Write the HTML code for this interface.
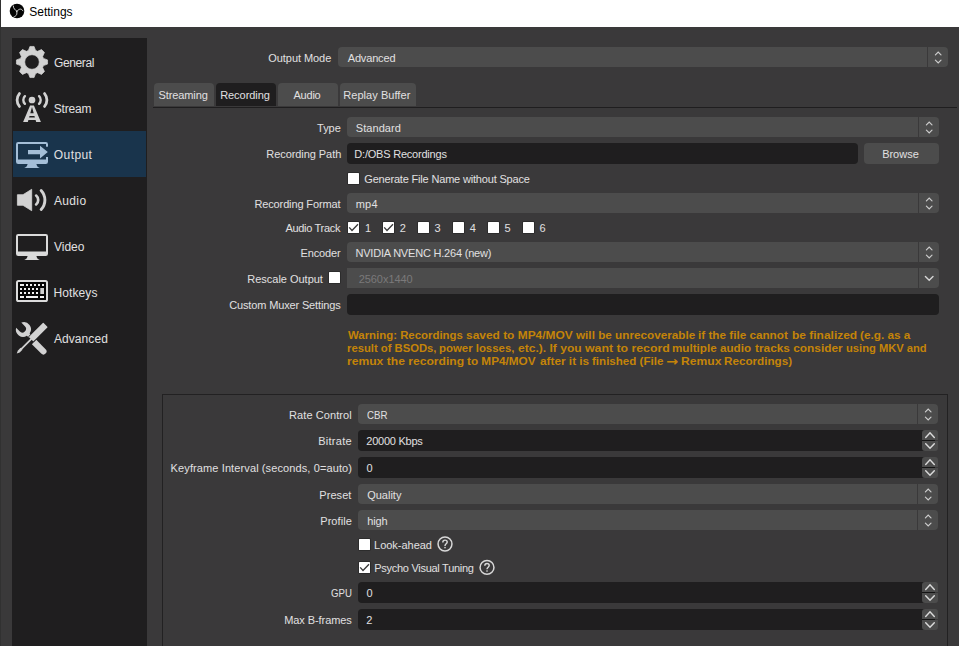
<!DOCTYPE html>
<html><head><meta charset="utf-8"><title>Settings</title>
<style>
html,body{margin:0;padding:0}
body{width:959px;height:646px;overflow:hidden;position:relative;background:#3a393a;font-family:"Liberation Sans",sans-serif;}
#w{position:absolute;left:0;top:0;width:959px;height:646px;overflow:hidden}
#w div{position:absolute}
#w span{position:absolute;white-space:pre}
#w svg{position:absolute;left:0;top:0}
</style></head><body><div id="w">
<div style="left:0px;top:0px;width:959px;height:27px;background:#ffffff;"></div>
<div style="left:0px;top:0px;width:1px;height:646px;background:#313131;"></div>
<div style="left:12px;top:38px;width:135px;height:608px;background:#1f1e1f;"></div>
<div style="left:13px;top:131px;width:133px;height:46px;background:#19344c;"></div>
<div style="left:154px;top:83px;width:60px;height:23px;background:#4c4c4c;border-radius:4px 4px 0 0"></div>
<div style="left:216px;top:83px;width:60px;height:23px;background:#1f1e1f;border-radius:4px 4px 0 0"></div>
<div style="left:278px;top:83px;width:60px;height:23px;background:#4c4c4c;border-radius:4px 4px 0 0"></div>
<div style="left:340px;top:83px;width:76px;height:23px;background:#4c4c4c;border-radius:4px 4px 0 0"></div>
<div style="left:153px;top:107px;width:804px;height:1px;background:#1f1e1f;"></div>
<div style="left:338px;top:47px;width:589px;height:20px;background:#4c4c4c;border-radius:4px 0 0 4px"></div>
<div style="left:928px;top:47px;width:20px;height:20px;background:#4c4c4c;border-radius:0 4px 4px 0"></div>
<div style="left:347px;top:117px;width:571px;height:20px;background:#4c4c4c;border-radius:4px 0 0 4px"></div>
<div style="left:919px;top:117px;width:20px;height:20px;background:#4c4c4c;border-radius:0 4px 4px 0"></div>
<div style="left:347px;top:143px;width:511px;height:21px;background:#1f1e1f;border-radius:4px"></div>
<div style="left:864px;top:143px;width:75px;height:21px;background:#4c4c4c;border-radius:4px"></div>
<div style="left:347px;top:172px;width:13px;height:13px;background:#2c2c2c;border-radius:2px"></div>
<div style="left:348px;top:173px;width:11px;height:11px;background:#ffffff;border-radius:0.5px"></div>
<div style="left:347px;top:193px;width:571px;height:20px;background:#4c4c4c;border-radius:4px 0 0 4px"></div>
<div style="left:919px;top:193px;width:20px;height:20px;background:#4c4c4c;border-radius:0 4px 4px 0"></div>
<div style="left:347px;top:221px;width:13px;height:13px;background:#2c2c2c;border-radius:2px"></div>
<div style="left:348px;top:222px;width:11px;height:11px;background:#ffffff;border-radius:0.5px"></div>
<div style="left:382px;top:221px;width:13px;height:13px;background:#2c2c2c;border-radius:2px"></div>
<div style="left:383px;top:222px;width:11px;height:11px;background:#ffffff;border-radius:0.5px"></div>
<div style="left:417px;top:221px;width:13px;height:13px;background:#2c2c2c;border-radius:2px"></div>
<div style="left:418px;top:222px;width:11px;height:11px;background:#ffffff;border-radius:0.5px"></div>
<div style="left:452px;top:221px;width:13px;height:13px;background:#2c2c2c;border-radius:2px"></div>
<div style="left:453px;top:222px;width:11px;height:11px;background:#ffffff;border-radius:0.5px"></div>
<div style="left:487px;top:221px;width:13px;height:13px;background:#2c2c2c;border-radius:2px"></div>
<div style="left:488px;top:222px;width:11px;height:11px;background:#ffffff;border-radius:0.5px"></div>
<div style="left:522px;top:221px;width:13px;height:13px;background:#2c2c2c;border-radius:2px"></div>
<div style="left:523px;top:222px;width:11px;height:11px;background:#ffffff;border-radius:0.5px"></div>
<div style="left:347px;top:242px;width:571px;height:20px;background:#4c4c4c;border-radius:4px 0 0 4px"></div>
<div style="left:919px;top:242px;width:20px;height:20px;background:#4c4c4c;border-radius:0 4px 4px 0"></div>
<div style="left:328px;top:271px;width:13px;height:13px;background:#2c2c2c;border-radius:2px"></div>
<div style="left:329px;top:272px;width:11px;height:11px;background:#ffffff;border-radius:0.5px"></div>
<div style="left:347px;top:268px;width:571px;height:20px;background:#4c4c4c;border-radius:0 0 0 0"></div>
<div style="left:919px;top:268px;width:20px;height:20px;background:#4c4c4c;border-radius:0 4px 4px 0"></div>
<div style="left:347px;top:294px;width:592px;height:21px;background:#1f1e1f;border-radius:4px"></div>
<div style="left:162px;top:394px;width:786px;height:260px;background:transparent;border:1px solid #222122;box-sizing:border-box"></div>
<div style="left:358px;top:404px;width:559px;height:20px;background:#4c4c4c;border-radius:4px 0 0 4px"></div>
<div style="left:918px;top:404px;width:20px;height:20px;background:#4c4c4c;border-radius:0 4px 4px 0"></div>
<div style="left:358px;top:430px;width:572px;height:21px;background:#1f1e1f;border-radius:4px 0 0 4px"></div>
<div style="left:922px;top:430px;width:16px;height:10px;background:#4c4c4c;border-radius:3px 3px 0 0"></div>
<div style="left:922px;top:441px;width:16px;height:10px;background:#4c4c4c;border-radius:0 0 3px 3px"></div>
<div style="left:922px;top:440px;width:13px;height:1px;background:#141414;"></div>
<div style="left:358px;top:457px;width:572px;height:21px;background:#1f1e1f;border-radius:4px 0 0 4px"></div>
<div style="left:922px;top:457px;width:16px;height:10px;background:#4c4c4c;border-radius:3px 3px 0 0"></div>
<div style="left:922px;top:468px;width:16px;height:10px;background:#4c4c4c;border-radius:0 0 3px 3px"></div>
<div style="left:922px;top:467px;width:13px;height:1px;background:#141414;"></div>
<div style="left:358px;top:484px;width:559px;height:20px;background:#4c4c4c;border-radius:4px 0 0 4px"></div>
<div style="left:918px;top:484px;width:20px;height:20px;background:#4c4c4c;border-radius:0 4px 4px 0"></div>
<div style="left:358px;top:510px;width:559px;height:20px;background:#4c4c4c;border-radius:4px 0 0 4px"></div>
<div style="left:918px;top:510px;width:20px;height:20px;background:#4c4c4c;border-radius:0 4px 4px 0"></div>
<div style="left:358px;top:538px;width:13px;height:13px;background:#2c2c2c;border-radius:2px"></div>
<div style="left:359px;top:539px;width:11px;height:11px;background:#ffffff;border-radius:0.5px"></div>
<div style="left:358px;top:561px;width:13px;height:13px;background:#2c2c2c;border-radius:2px"></div>
<div style="left:359px;top:562px;width:11px;height:11px;background:#ffffff;border-radius:0.5px"></div>
<div style="left:358px;top:582px;width:572px;height:21px;background:#1f1e1f;border-radius:4px 0 0 4px"></div>
<div style="left:922px;top:582px;width:16px;height:10px;background:#4c4c4c;border-radius:3px 3px 0 0"></div>
<div style="left:922px;top:593px;width:16px;height:10px;background:#4c4c4c;border-radius:0 0 3px 3px"></div>
<div style="left:922px;top:592px;width:13px;height:1px;background:#141414;"></div>
<div style="left:358px;top:609px;width:572px;height:21px;background:#1f1e1f;border-radius:4px 0 0 4px"></div>
<div style="left:922px;top:609px;width:16px;height:10px;background:#4c4c4c;border-radius:3px 3px 0 0"></div>
<div style="left:922px;top:620px;width:16px;height:10px;background:#4c4c4c;border-radius:0 0 3px 3px"></div>
<div style="left:922px;top:619px;width:13px;height:1px;background:#141414;"></div>
<svg width="959" height="646" viewBox="0 0 959 646"><path d="M935.4 54.85 L938.2 52.15 L941 54.85" fill="none" stroke="#cdcdcd" stroke-width="1.2" stroke-linecap="round" stroke-linejoin="miter"/>
<path d="M935.4 60.15 L938.2 62.85 L941 60.15" fill="none" stroke="#cdcdcd" stroke-width="1.2" stroke-linecap="round" stroke-linejoin="miter"/>
<path d="M926.4 124.85 L929.2 122.15 L932 124.85" fill="none" stroke="#cdcdcd" stroke-width="1.2" stroke-linecap="round" stroke-linejoin="miter"/>
<path d="M926.4 130.15 L929.2 132.85 L932 130.15" fill="none" stroke="#cdcdcd" stroke-width="1.2" stroke-linecap="round" stroke-linejoin="miter"/>
<path d="M926.4 200.85 L929.2 198.15 L932 200.85" fill="none" stroke="#cdcdcd" stroke-width="1.2" stroke-linecap="round" stroke-linejoin="miter"/>
<path d="M926.4 206.15 L929.2 208.85 L932 206.15" fill="none" stroke="#cdcdcd" stroke-width="1.2" stroke-linecap="round" stroke-linejoin="miter"/>
<path d="M349.2 227.4 L352 230.4 L358 224.2" fill="none" stroke="#3a3a3a" stroke-width="1.35"/>
<path d="M384.2 227.4 L387 230.4 L393 224.2" fill="none" stroke="#3a3a3a" stroke-width="1.35"/>
<path d="M926.4 249.85 L929.2 247.15 L932 249.85" fill="none" stroke="#cdcdcd" stroke-width="1.2" stroke-linecap="round" stroke-linejoin="miter"/>
<path d="M926.4 255.15 L929.2 257.85 L932 255.15" fill="none" stroke="#cdcdcd" stroke-width="1.2" stroke-linecap="round" stroke-linejoin="miter"/>
<path d="M925.4 276.4 L929.2 280.2 L933 276.4" fill="none" stroke="#d6d6d6" stroke-width="1.4" stroke-linecap="round" stroke-linejoin="miter"/>
<path d="M925.4 411.85 L928.2 409.15 L931 411.85" fill="none" stroke="#cdcdcd" stroke-width="1.2" stroke-linecap="round" stroke-linejoin="miter"/>
<path d="M925.4 417.15 L928.2 419.85 L931 417.15" fill="none" stroke="#cdcdcd" stroke-width="1.2" stroke-linecap="round" stroke-linejoin="miter"/>
<path d="M925.7 437.4 L930 432.8 L934.3 437.4" fill="none" stroke="#dadada" stroke-width="1.45" stroke-linecap="round" stroke-linejoin="miter"/>
<path d="M925.7 443.7 L930 448.3 L934.3 443.7" fill="none" stroke="#dadada" stroke-width="1.45" stroke-linecap="round" stroke-linejoin="miter"/>
<path d="M925.7 464.4 L930 459.8 L934.3 464.4" fill="none" stroke="#dadada" stroke-width="1.45" stroke-linecap="round" stroke-linejoin="miter"/>
<path d="M925.7 470.7 L930 475.3 L934.3 470.7" fill="none" stroke="#dadada" stroke-width="1.45" stroke-linecap="round" stroke-linejoin="miter"/>
<path d="M925.4 491.85 L928.2 489.15 L931 491.85" fill="none" stroke="#cdcdcd" stroke-width="1.2" stroke-linecap="round" stroke-linejoin="miter"/>
<path d="M925.4 497.15 L928.2 499.85 L931 497.15" fill="none" stroke="#cdcdcd" stroke-width="1.2" stroke-linecap="round" stroke-linejoin="miter"/>
<path d="M925.4 517.85 L928.2 515.15 L931 517.85" fill="none" stroke="#cdcdcd" stroke-width="1.2" stroke-linecap="round" stroke-linejoin="miter"/>
<path d="M925.4 523.15 L928.2 525.85 L931 523.15" fill="none" stroke="#cdcdcd" stroke-width="1.2" stroke-linecap="round" stroke-linejoin="miter"/>
<path d="M360.2 567.4 L363 570.4 L369 564.2" fill="none" stroke="#3a3a3a" stroke-width="1.35"/>
<circle cx="445" cy="544" r="6.95" fill="none" stroke="#d8d8d8" stroke-width="1.5"/>
<path d="M442.8 542.4 C442.8 540.8 443.8 540.1 445 540.1 C446.3 540.1 447.2 540.9 447.2 542.1 C447.2 543.8 445 543.8 445 545.9" fill="none" stroke="#d8d8d8" stroke-width="1.45"/>
<rect x="444.3" y="546.9" width="1.4" height="1.4" fill="#d8d8d8"/>
<circle cx="487" cy="567.4" r="6.95" fill="none" stroke="#d8d8d8" stroke-width="1.5"/>
<path d="M484.8 565.8 C484.8 564.2 485.8 563.5 487 563.5 C488.3 563.5 489.2 564.3 489.2 565.5 C489.2 567.2 487 567.2 487 569.3" fill="none" stroke="#d8d8d8" stroke-width="1.45"/>
<rect x="486.3" y="570.3" width="1.4" height="1.4" fill="#d8d8d8"/>
<path d="M925.7 589.4 L930 584.8 L934.3 589.4" fill="none" stroke="#dadada" stroke-width="1.45" stroke-linecap="round" stroke-linejoin="miter"/>
<path d="M925.7 595.7 L930 600.3 L934.3 595.7" fill="none" stroke="#dadada" stroke-width="1.45" stroke-linecap="round" stroke-linejoin="miter"/>
<path d="M925.7 616.4 L930 611.8 L934.3 616.4" fill="none" stroke="#dadada" stroke-width="1.45" stroke-linecap="round" stroke-linejoin="miter"/>
<path d="M925.7 622.7 L930 627.3 L934.3 622.7" fill="none" stroke="#dadada" stroke-width="1.45" stroke-linecap="round" stroke-linejoin="miter"/>
<path fill-rule="evenodd" fill="#d2d2d2" stroke="#d2d2d2" stroke-width="0.7" stroke-linejoin="round" d="M28.39 50.56 L29.92 46.44 L34.08 46.44 L35.61 50.56 A12.00 12.00 0 0 1 37.54 51.36 L41.54 49.53 L44.47 52.46 L42.64 56.46 A12.00 12.00 0 0 1 43.44 58.39 L47.56 59.92 L47.56 64.08 L43.44 65.61 A12.00 12.00 0 0 1 42.64 67.54 L44.47 71.54 L41.54 74.47 L37.54 72.64 A12.00 12.00 0 0 1 35.61 73.44 L34.08 77.56 L29.92 77.56 L28.39 73.44 A12.00 12.00 0 0 1 26.46 72.64 L22.46 74.47 L19.53 71.54 L21.36 67.54 A12.00 12.00 0 0 1 20.56 65.61 L16.44 64.08 L16.44 59.92 L20.56 58.39 A12.00 12.00 0 0 1 21.36 56.46 L19.53 52.46 L22.46 49.53 L26.46 51.36 A12.00 12.00 0 0 1 28.39 50.56 Z M39.30 62.00 A7.30 7.30 0 1 0 24.70 62.00 A7.30 7.30 0 1 0 39.30 62.00 Z"/>
<circle cx="32" cy="100" r="3.35" fill="#d2d2d2"/><path fill-rule="evenodd" fill="#d2d2d2" d="M30.1 105.4 L33.9 105.4 L40.9 122 L36.17 122 L35.61 120 L28.39 120 L27.83 122 L23.1 122 Z M32 107.1 L30.29 113.2 L33.71 113.2 Z M29.54 115.9 L29.09 117.5 L34.91 117.5 L34.46 115.9 Z"/><path d="M24.92 103.81 A5.30 5.30 0 0 1 24.92 96.19" fill="none" stroke="#d2d2d2" stroke-width="2.40" stroke-linecap="round"/><path d="M39.08 96.19 A5.30 5.30 0 0 1 39.08 103.81" fill="none" stroke="#d2d2d2" stroke-width="2.40" stroke-linecap="round"/><path d="M19.44 106.43 A10.00 10.00 0 0 1 19.44 93.57" fill="none" stroke="#d2d2d2" stroke-width="2.80" stroke-linecap="round"/><path d="M44.56 93.57 A10.00 10.00 0 0 1 44.56 106.43" fill="none" stroke="#d2d2d2" stroke-width="2.80" stroke-linecap="round"/>
<path fill-rule="evenodd" fill="#a4bed7" d="M18.2 142 H45.8 A2.2 2.2 0 0 1 48 144.2 V161.8 A2.2 2.2 0 0 1 45.8 164 H18.2 A2.2 2.2 0 0 1 16 161.8 V144.2 A2.2 2.2 0 0 1 18.2 142 Z M18 144 V159.6 H46 V144 Z"/><rect x="45.3" y="146.7" width="3.2" height="10.3" fill="#19344c"/><path fill="#a4bed7" d="M28 150.1 H40 V145.7 L47.8 152.1 L40 158.6 V154.2 H28 Z"/><path fill="#a4bed7" d="M27.6 164 H36.4 C36.8 166 37.6 167.2 39.8 168 H24.2 C26.4 167.2 27.2 166 27.6 164 Z"/>
<path fill="#d2d2d2" stroke="#d2d2d2" stroke-width="0.8" stroke-linejoin="round" d="M17.4 194.7 H23 L31.7 189.3 V210.7 L23 205.3 H17.4 Z"/><path d="M36.13 195.56 A5.80 5.80 0 0 1 36.13 204.44" fill="none" stroke="#d2d2d2" stroke-width="2.70" stroke-linecap="round"/><path d="M41.14 190.45 A14.00 14.00 0 0 1 41.14 209.55" fill="none" stroke="#d2d2d2" stroke-width="2.90" stroke-linecap="round"/>
<path fill-rule="evenodd" fill="#dadada" d="M18.2 234 H45.8 A2.2 2.2 0 0 1 48 236.2 V253.8 A2.2 2.2 0 0 1 45.8 256 H18.2 A2.2 2.2 0 0 1 16 253.8 V236.2 A2.2 2.2 0 0 1 18.2 234 Z M18 236 V251.6 H46 V236 Z"/><path fill="#dadada" d="M27.6 256 H36.4 C36.8 258 37.6 259.2 39.8 260 H24.2 C26.4 259.2 27.2 258 27.6 256 Z"/>
<rect x="17" y="281" width="30" height="20" rx="1.6" fill="#050505" stroke="#dcdcdc" stroke-width="2"/><rect x="20" y="284" width="4" height="2" fill="#f0f0f0"/><rect x="26" y="284" width="2" height="2" fill="#f0f0f0"/><rect x="30" y="284" width="2" height="2" fill="#f0f0f0"/><rect x="34" y="284" width="2" height="2" fill="#f0f0f0"/><rect x="38" y="284" width="2" height="2" fill="#f0f0f0"/><rect x="42" y="284" width="2" height="2" fill="#f0f0f0"/><rect x="20" y="288" width="2" height="2" fill="#f0f0f0"/><rect x="24" y="288" width="2" height="2" fill="#f0f0f0"/><rect x="28" y="288" width="2" height="2" fill="#f0f0f0"/><rect x="32" y="288" width="2" height="2" fill="#f0f0f0"/><rect x="36" y="288" width="2" height="2" fill="#f0f0f0"/><rect x="20" y="292" width="2" height="2" fill="#f0f0f0"/><rect x="24" y="292" width="2" height="2" fill="#f0f0f0"/><rect x="28" y="292" width="2" height="2" fill="#f0f0f0"/><rect x="32" y="292" width="2" height="2" fill="#f0f0f0"/><rect x="36" y="292" width="2" height="2" fill="#f0f0f0"/><rect x="40.3" y="288" width="3.7" height="6" fill="#cfcfcf"/><rect x="20" y="296" width="4" height="2" fill="#f0f0f0"/><rect x="26" y="296" width="12" height="2" fill="#f0f0f0"/><rect x="40" y="296" width="4" height="2" fill="#f0f0f0"/>
<g transform="translate(33 341) rotate(45)"><path d="M1.5 -3.1 H14.7 A3.1 3.1 0 0 1 14.7 3.1 H1.5 Z" fill="#d2d2d2"/></g><path fill="#d2d2d2" d="M21.3 322.6 A7.2 7.2 0 0 1 29.6 333.6 L31.6 335.6 L29.2 338 L26.9 335.7 A7.2 7.2 0 0 1 16.1 327.8 L19.6 331.3 A3.4 3.4 0 0 0 24.9 326.2 Z"/><g transform="translate(32.5 337.8) rotate(-45)"><rect x="-2" y="-3.2" width="20.4" height="6.4" rx="0.6" fill="#d2d2d2" stroke="#1f1e1f" stroke-width="1.5" paint-order="stroke"/><rect x="-16" y="-0.9" width="14.5" height="1.8" fill="#d2d2d2"/><path d="M-15.5 -1.35 L-19.5 -1.35 L-22.3 0 L-19.5 1.35 L-15.5 1.35 Z" fill="#d2d2d2"/></g>
<circle cx="17" cy="11" r="7.3" fill="#050505"/>
<path d="M16.8 11.3 C15.9 10.4 15 9.9 14.6 9.2 C13.8 8.2 13.3 7.2 13.3 6 M16.8 11.3 C17.8 10.2 19 9.2 20.3 9.1 C21.4 9.1 22.3 9.8 22.9 10.8 M16.8 11.3 C17 12.6 17 13.8 16.6 14.7 C16.1 15.7 15.2 16.4 14 16.8" fill="none" stroke="#f2f2f2" stroke-width="0.85" stroke-linecap="round"/>
<circle cx="16.8" cy="11.3" r="0.8" fill="#cfcfcf"/></svg>
<span style="left:29.25px;top:5px;font-size:12px;line-height:14px;color:#000000;letter-spacing:-0.01px;">Settings</span>
<span style="left:54.00px;top:56px;font-size:12px;line-height:14px;color:#e1e0e1;letter-spacing:-0.38px;">General</span>
<span style="left:53.65px;top:102px;font-size:12px;line-height:14px;color:#e1e0e1;letter-spacing:-0.15px;">Stream</span>
<span style="left:53.86px;top:148px;font-size:12px;line-height:14px;color:#e1e0e1;letter-spacing:0.41px;">Output</span>
<span style="left:53.95px;top:194px;font-size:12px;line-height:14px;color:#e1e0e1;letter-spacing:0.36px;">Audio</span>
<span style="left:53.94px;top:240px;font-size:12px;line-height:14px;color:#e1e0e1;letter-spacing:0.02px;">Video</span>
<span style="left:53.51px;top:286px;font-size:12px;line-height:14px;color:#e1e0e1;letter-spacing:0.10px;">Hotkeys</span>
<span style="left:53.95px;top:332px;font-size:12px;line-height:14px;color:#e1e0e1;letter-spacing:0.07px;">Advanced</span>
<span style="left:268.29px;top:52px;font-size:11px;line-height:13px;color:#e1e0e1;letter-spacing:-0.06px;">Output Mode</span>
<span style="left:347.73px;top:52px;font-size:11px;line-height:13px;color:#e1e0e1;letter-spacing:-0.16px;">Advanced</span>
<span style="left:158.51px;top:89px;font-size:11px;line-height:13px;color:#e1e0e1;letter-spacing:-0.11px;">Streaming</span>
<span style="left:220.15px;top:89px;font-size:11px;line-height:13px;color:#e1e0e1;letter-spacing:-0.04px;">Recording</span>
<span style="left:293.53px;top:89px;font-size:11px;line-height:13px;color:#e1e0e1;letter-spacing:-0.23px;">Audio</span>
<span style="left:343.25px;top:89px;font-size:11px;line-height:13px;color:#e1e0e1;letter-spacing:0.05px;">Replay Buffer</span>
<span style="left:317.08px;top:122px;font-size:11px;line-height:13px;color:#e1e0e1;letter-spacing:-0.05px;">Type</span>
<span style="left:266.25px;top:148px;font-size:11px;line-height:13px;color:#e1e0e1;letter-spacing:-0.06px;">Recording Path</span>
<span style="left:254.45px;top:198px;font-size:11px;line-height:13px;color:#e1e0e1;letter-spacing:-0.13px;">Recording Format</span>
<span style="left:285.43px;top:222px;font-size:11px;line-height:13px;color:#e1e0e1;letter-spacing:-0.31px;">Audio Track</span>
<span style="left:300.55px;top:247px;font-size:11px;line-height:13px;color:#e1e0e1;letter-spacing:-0.16px;">Encoder</span>
<span style="left:247.35px;top:273px;font-size:11px;line-height:13px;color:#e1e0e1;letter-spacing:-0.02px;">Rescale Output</span>
<span style="left:229.16px;top:299px;font-size:11px;line-height:13px;color:#e1e0e1;letter-spacing:-0.14px;">Custom Muxer Settings</span>
<span style="left:355.81px;top:122px;font-size:11px;line-height:13px;color:#e1e0e1;letter-spacing:0.05px;">Standard</span>
<span style="left:354.30px;top:148px;font-size:11px;line-height:13px;color:#e1e0e1;letter-spacing:-0.21px;">D:/OBS Recordings</span>
<span style="left:364.26px;top:173px;font-size:11px;line-height:13px;color:#e1e0e1;letter-spacing:-0.18px;">Generate File Name without Space</span>
<span style="left:355.80px;top:198px;font-size:11px;line-height:13px;color:#e1e0e1;letter-spacing:0.15px;">mp4</span>
<span style="left:364.96px;top:222px;font-size:11px;line-height:13px;color:#e1e0e1;">1</span>
<span style="left:399.67px;top:222px;font-size:11px;line-height:13px;color:#e1e0e1;">2</span>
<span style="left:434.60px;top:222px;font-size:11px;line-height:13px;color:#e1e0e1;">3</span>
<span style="left:469.73px;top:222px;font-size:11px;line-height:13px;color:#e1e0e1;">4</span>
<span style="left:504.59px;top:222px;font-size:11px;line-height:13px;color:#e1e0e1;">5</span>
<span style="left:539.46px;top:222px;font-size:11px;line-height:13px;color:#e1e0e1;">6</span>
<span style="left:355.42px;top:247px;font-size:11px;line-height:13px;color:#e1e0e1;letter-spacing:-0.20px;">NVIDIA NVENC H.264 (new)</span>
<span style="left:358.67px;top:273px;font-size:11px;line-height:13px;color:#7a797a;letter-spacing:-0.05px;">2560x1440</span>
<span style="left:882.15px;top:148px;font-size:11px;line-height:13px;color:#e1e0e1;letter-spacing:-0.01px;">Browse</span>
<span style="left:289.05px;top:409px;font-size:11px;line-height:13px;color:#e1e0e1;letter-spacing:0.08px;">Rate Control</span>
<span style="left:318.25px;top:435px;font-size:11px;line-height:13px;color:#e1e0e1;letter-spacing:0.26px;">Bitrate</span>
<span style="left:170.62px;top:462px;font-size:11px;line-height:13px;color:#e1e0e1;letter-spacing:0.11px;">Keyframe Interval (seconds, 0=auto)</span>
<span style="left:319.35px;top:489px;font-size:11px;line-height:13px;color:#e1e0e1;letter-spacing:0.05px;">Preset</span>
<span style="left:320.25px;top:515px;font-size:11px;line-height:13px;color:#e1e0e1;letter-spacing:0.06px;">Profile</span>
<span style="left:331.11px;top:587px;font-size:11px;line-height:13px;color:#e1e0e1;transform:scaleX(0.8763);transform-origin:0 0;">GPU</span>
<span style="left:284.22px;top:614px;font-size:11px;line-height:13px;color:#e1e0e1;letter-spacing:-0.08px;">Max B-frames</span>
<span style="left:367.19px;top:409px;font-size:11px;line-height:13px;color:#e1e0e1;transform:scaleX(0.8816);transform-origin:0 0;">CBR</span>
<span style="left:366.37px;top:435px;font-size:11px;line-height:13px;color:#e1e0e1;letter-spacing:-0.25px;">20000 Kbps</span>
<span style="left:366.42px;top:462px;font-size:11px;line-height:13px;color:#e1e0e1;">0</span>
<span style="left:367.19px;top:489px;font-size:11px;line-height:13px;color:#e1e0e1;">Quality</span>
<span style="left:367.20px;top:515px;font-size:11px;line-height:13px;color:#e1e0e1;letter-spacing:-0.09px;">high</span>
<span style="left:374.10px;top:539px;font-size:11px;line-height:13px;color:#e1e0e1;letter-spacing:-0.03px;">Look-ahead</span>
<span style="left:374.15px;top:562px;font-size:11px;line-height:13px;color:#e1e0e1;letter-spacing:-0.27px;">Psycho Visual Tuning</span>
<span style="left:366.42px;top:587px;font-size:11px;line-height:13px;color:#e1e0e1;">0</span>
<span style="left:366.37px;top:614px;font-size:11px;line-height:13px;color:#e1e0e1;">2</span>
<span style="left:347.62px;top:329px;font-size:11px;line-height:13px;color:#c48408;font-weight:700;transform:scaleX(1.0362);transform-origin:0 0;">Warning: Recordings</span>
<span style="left:465.61px;top:329px;font-size:11px;line-height:13px;color:#c48408;font-weight:700;transform:scaleX(1.0845);transform-origin:0 0;">saved to MP4/MOV</span>
<span style="left:576.24px;top:329px;font-size:11px;line-height:13px;color:#c48408;font-weight:700;transform:scaleX(1.0653);transform-origin:0 0;">will be unrecoverable</span>
<span style="left:698.46px;top:329px;font-size:11px;line-height:13px;color:#c48408;font-weight:700;transform:scaleX(1.0651);transform-origin:0 0;">if the file cannot</span>
<span style="left:791.78px;top:329px;font-size:11px;line-height:13px;color:#c48408;font-weight:700;transform:scaleX(1.0882);transform-origin:0 0;">be finalized</span>
<span style="left:860.02px;top:329px;font-size:11px;line-height:13px;color:#c48408;font-weight:700;transform:scaleX(1.0702);transform-origin:0 0;">(e.g. as a</span>
<span style="left:347.10px;top:342px;font-size:11px;line-height:13px;color:#c48408;font-weight:700;transform:scaleX(1.0233);transform-origin:0 0;">result of BSODs,</span>
<span style="left:439.38px;top:342px;font-size:11px;line-height:13px;color:#c48408;font-weight:700;transform:scaleX(1.0363);transform-origin:0 0;">power losses,</span>
<span style="left:517.80px;top:342px;font-size:11px;line-height:13px;color:#c48408;font-weight:700;transform:scaleX(1.0968);transform-origin:0 0;">etc.). If you</span>
<span style="left:584.94px;top:342px;font-size:11px;line-height:13px;color:#c48408;font-weight:700;transform:scaleX(1.1186);transform-origin:0 0;">want to record</span>
<span style="left:672.28px;top:342px;font-size:11px;line-height:13px;color:#c48408;font-weight:700;transform:scaleX(1.0600);transform-origin:0 0;">multiple audio</span>
<span style="left:754.92px;top:342px;font-size:11px;line-height:13px;color:#c48408;font-weight:700;transform:scaleX(1.0775);transform-origin:0 0;">tracks consider</span>
<span style="left:846.05px;top:342px;font-size:11px;line-height:13px;color:#c48408;font-weight:700;transform:scaleX(1.0157);transform-origin:0 0;">using MKV and</span>
<span style="left:347.06px;top:355px;font-size:11px;line-height:13px;color:#c48408;font-weight:700;transform:scaleX(1.1006);transform-origin:0 0;">remux the recording</span>
<span style="left:467.42px;top:355px;font-size:11px;line-height:13px;color:#c48408;font-weight:700;transform:scaleX(1.0686);transform-origin:0 0;">to MP4/MOV</span>
<span style="left:539.68px;top:355px;font-size:11px;line-height:13px;color:#c48408;font-weight:700;transform:scaleX(1.0725);transform-origin:0 0;">after it is</span>
<span style="left:592.38px;top:355px;font-size:11px;line-height:13px;color:#c48408;font-weight:700;transform:scaleX(1.0515);transform-origin:0 0;">finished (File</span>
<span style="left:680.98px;top:355px;font-size:11px;line-height:13px;color:#c48408;font-weight:700;transform:scaleX(1.1019);transform-origin:0 0;">Remux</span>
<span style="left:724.38px;top:355px;font-size:11px;line-height:13px;color:#c48408;font-weight:700;transform:scaleX(1.0611);transform-origin:0 0;">Recordings)</span>
<span style="left:666.1px;top:352px;font-family:'DejaVu Sans','Liberation Sans',sans-serif;font-size:13px;font-weight:700;line-height:20px;color:#c48408;transform:scaleX(1.1);transform-origin:0 0">→</span>
</div></body></html>
